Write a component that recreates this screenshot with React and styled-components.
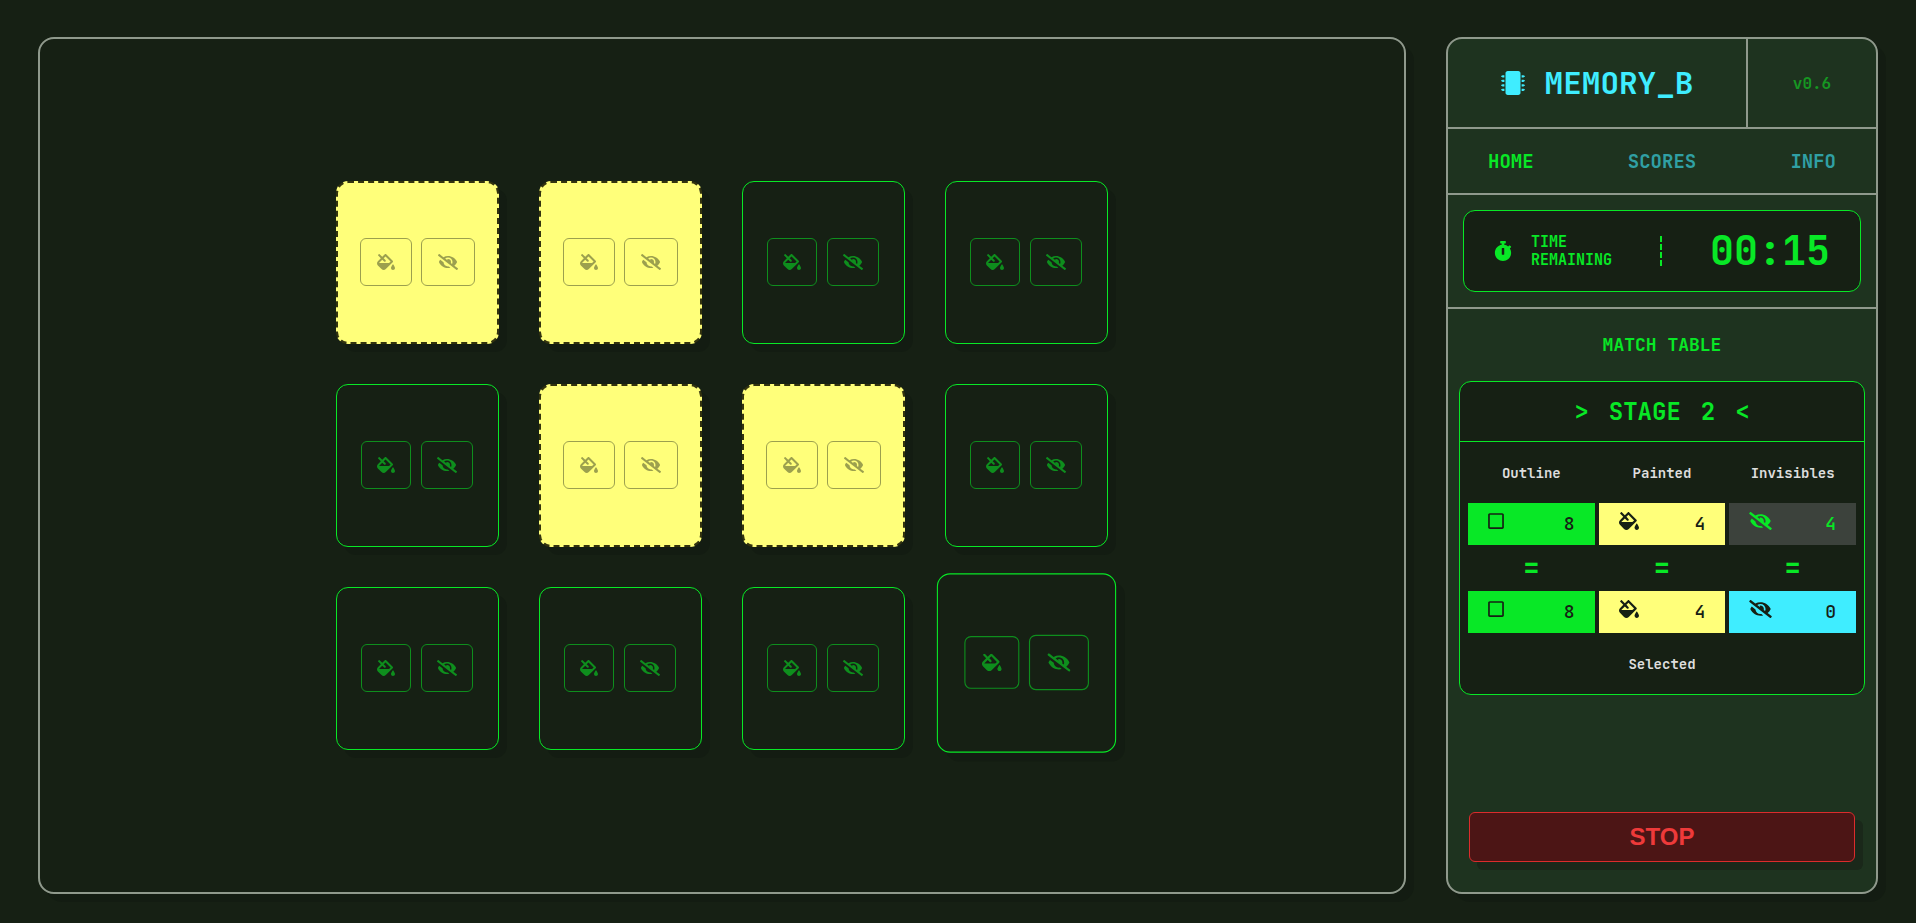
import React from 'react';
import styled, { createGlobalStyle, css } from 'styled-components';
import { FaMicrochip, FaStopwatch, FaFillDrip, FaEyeSlash, FaRegSquare } from 'react-icons/fa';

const color = {
  bg: '#162014',
  panel: '#1e331f',
  line: '#8f998c',
  green: '#08e826',
  yellow: '#ffff7a',
  cyan: '#3fedff',
  grey: '#3c423c',
  text: '#dddddd',
};
const mono = `'JetBrains Mono', 'DejaVu Sans Mono', 'Liberation Mono', monospace`;

const GlobalStyle = createGlobalStyle`
  *, *::before, *::after { box-sizing: border-box; }
  body { margin: 0; background: ${color.bg}; color: ${color.green}; font-family: ${mono}; }
  button { font: inherit; cursor: pointer; }
`;

const Page = styled.div`
  display: flex;
  gap: 40px;
  min-height: 100vh;
  padding: 37px 38px 29px;
`;

const shadow = '8px 8px 0 rgba(15, 22, 15, 0.35)';

const panel = css`
  border: 2px solid ${color.line};
  border-radius: 16px;
  box-shadow: ${shadow};
`;

const Board = styled.main`
  ${panel}
  flex: 1;
  display: flex;
  align-items: center;
  justify-content: center;
`;

const CardGrid = styled.div`
  display: grid;
  grid-template-columns: repeat(4, 163px);
  gap: 40px;
`;

const Card = styled.div`
  display: flex;
  align-items: center;
  justify-content: center;
  gap: 10px;
  aspect-ratio: 1;
  padding: 0 1px 1px 0;
  border: 1px solid ${color.green};
  border-radius: 12px;
  background: ${color.bg};
  color: ${color.green};
  box-shadow: ${shadow};
  ${(p) => p.$painted && css`
    gap: 9px;
    border: 2px dashed #33330f;
    background: ${color.yellow};
    color: ${color.bg};
  `}
  ${(p) => p.$active && css`transform: scale(1.1) translateY(-5px);`}
`;

const CardButton = styled.button`
  display: flex;
  align-items: center;
  justify-content: center;
  padding: ${(p) => (p.$painted ? '15px 16px' : '15px')};
  border: 1px solid currentColor;
  border-radius: 6px;
  background: transparent;
  color: inherit;
  opacity: ${(p) => (p.$painted ? 0.42 : 0.55)};
  ${(p) => p.$active && css`transform: scale(1.05);`}
`;

const glyph = (ratio) => css`
  display: block;
  height: ${(p) => p.$size}px;
  width: ${(p) => Math.round(p.$size * ratio)}px;
`;
const BucketIcon = styled(({ $size, ...p }) => <FaFillDrip {...p} />)`${glyph(1.125)}`;
const EyeIcon = styled(({ $size, ...p }) => <FaEyeSlash {...p} />)`${glyph(1.25)}`;
const SquareIcon = styled(({ $size, ...p }) => <FaRegSquare {...p} />)`${glyph(0.875)}`;
const WatchIcon = styled(({ $size, ...p }) => <FaStopwatch {...p} />)`${glyph(0.875)}`;
const ChipIcon = styled(({ $size, ...p }) => <FaMicrochip {...p} />)`${glyph(1)}`;

const Sidebar = styled.aside`
  ${panel}
  flex: 0 0 432px;
  display: flex;
  flex-direction: column;
  background: ${color.panel};
`;

const Header = styled.header`
  display: flex;
  height: 90px;
  border-bottom: 2px solid ${color.line};
`;

const Brand = styled.div`
  flex: 1;
  display: flex;
  align-items: center;
  justify-content: center;
  gap: 20px;
  color: ${color.cyan};
`;

const Title = styled.h1`
  margin: 0;
  font-size: 31px;
  line-height: 40px;
  font-weight: 700;
`;

const Version = styled.div`
  flex: 0 0 130px;
  display: flex;
  align-items: center;
  justify-content: center;
  border-left: 2px solid ${color.line};
  color: #169722;
  font-size: 16px;
  font-weight: 700;
`;

const Nav = styled.nav`
  display: flex;
  align-items: center;
  justify-content: space-between;
  height: 66px;
  padding: 0 40px;
  border-bottom: 2px solid ${color.line};
`;

const NavLink = styled.a`
  color: ${(p) => (p.$current ? color.green : '#30a0a4')};
  font-size: 19px;
  font-weight: 700;
  text-decoration: none;
`;

const TimerSection = styled.section`
  padding: 15px;
  border-bottom: 2px solid ${color.line};
`;

const TimerBox = styled.div`
  display: flex;
  align-items: center;
  justify-content: space-between;
  height: 82px;
  padding: 0 30px;
  border: 1px solid ${color.green};
  border-radius: 12px;
  background: ${color.bg};
`;

const TimerLabel = styled.div`
  display: flex;
  align-items: center;
  gap: 19px;
  font-size: 15px;
  line-height: 18px;
  font-weight: 700;
`;

const Divider = styled.span`
  height: 30px;
  border-left: 2px dashed ${color.green};
`;

const Clock = styled.time`
  font-size: 40px;
  line-height: 48px;
  font-weight: 700;
`;

const SectionTitle = styled.h2`
  margin: 0;
  font-size: 18px;
  line-height: 72px;
  font-weight: 700;
  text-align: center;
`;

const MatchBox = styled.section`
  margin: 0 11px;
  border: 1px solid ${color.green};
  border-radius: 12px;
  background: ${color.bg};
`;

const Stage = styled.h3`
  display: flex;
  justify-content: center;
  gap: 20px;
  margin: 0;
  border-bottom: 1px solid ${color.green};
  font-size: 24px;
  line-height: 59px;
  font-weight: 700;
`;

const MatchTable = styled.table`
  width: 100%;
  padding: 0 4px;
  border-collapse: separate;
  border-spacing: 4px 0;
  table-layout: fixed;
`;

const Label = styled.th`
  height: 61px;
  padding: 0;
  color: ${color.text};
  font-size: 14px;
  font-weight: 700;
`;

const Equals = styled.td`
  height: 46px;
  padding: 0;
  font-size: 28px;
  line-height: 44px;
  font-weight: 700;
  text-align: center;
  vertical-align: top;
`;

const Cell = styled.td`
  height: 42px;
  padding: 0 20px;
  background: ${(p) => color[p.$fill]};
  color: ${(p) => (p.$fill === 'grey' ? color.green : color.bg)};
  font-size: 18px;
  font-weight: 500;
  line-height: 24px;
`;

const CellContent = styled.div`
  display: flex;
  align-items: center;
  justify-content: space-between;
  svg { margin-bottom: 6px; }
`;

const Footer = styled.footer`
  display: flex;
  margin-top: auto;
  padding: 30px 21px;
`;

const StopButton = styled.button`
  flex: 1;
  height: 50px;
  border: 1px solid #dc2c2c;
  border-radius: 6px;
  background: #4c1515;
  color: #ee3a3a;
  box-shadow: 8px 8px 0 #1a281a;
  font-family: Arial, 'Liberation Sans', sans-serif;
  font-size: 24px;
  font-weight: 700;
`;

const cards = [
  { painted: true }, { painted: true }, {}, {},
  {}, { painted: true }, { painted: true }, {},
  {}, {}, {}, { active: true },
];

const target = [
  { fill: 'green', Icon: SquareIcon, count: 8 },
  { fill: 'yellow', Icon: BucketIcon, count: 4 },
  { fill: 'grey', Icon: EyeIcon, count: 4 },
];
const selected = [
  { fill: 'green', Icon: SquareIcon, count: 8 },
  { fill: 'yellow', Icon: BucketIcon, count: 4 },
  { fill: 'cyan', Icon: EyeIcon, count: 0 },
];

function CountRow({ items }) {
  return (
    <tr>
      {items.map(({ fill, Icon, count }) => (
        <Cell key={fill} $fill={fill}>
          <CellContent><Icon $size={18} /><span>{count}</span></CellContent>
        </Cell>
      ))}
    </tr>
  );
}

export default function App() {
  return (
    <>
      <GlobalStyle />
      <Page>
        <Board>
          <CardGrid>
            {cards.map((c, i) => (
              <Card key={i} $painted={c.painted} $active={c.active}>
                <CardButton type="button" aria-label="Paint" $painted={c.painted}>
                  <BucketIcon $size={16} />
                </CardButton>
                <CardButton type="button" aria-label="Hide" $painted={c.painted} $active={c.active}>
                  <EyeIcon $size={16} />
                </CardButton>
              </Card>
            ))}
          </CardGrid>
        </Board>
        <Sidebar>
          <Header>
            <Brand><ChipIcon $size={24} /><Title>MEMORY_B</Title></Brand>
            <Version>v0.6</Version>
          </Header>
          <Nav>
            <NavLink href="#home" $current>HOME</NavLink>
            <NavLink href="#scores">SCORES</NavLink>
            <NavLink href="#info">INFO</NavLink>
          </Nav>
          <TimerSection>
            <TimerBox>
              <TimerLabel><WatchIcon $size={20} /><span>TIME<br />REMAINING</span></TimerLabel>
              <Divider />
              <Clock>00:15</Clock>
            </TimerBox>
          </TimerSection>
          <SectionTitle>MATCH TABLE</SectionTitle>
          <MatchBox>
            <Stage><span>&gt;</span><span>STAGE</span><span>2</span><span>&lt;</span></Stage>
            <MatchTable>
              <thead>
                <tr>
                  <Label scope="col">Outline</Label>
                  <Label scope="col">Painted</Label>
                  <Label scope="col">Invisibles</Label>
                </tr>
              </thead>
              <tbody>
                <CountRow items={target} />
                <tr><Equals>=</Equals><Equals>=</Equals><Equals>=</Equals></tr>
                <CountRow items={selected} />
              </tbody>
              <tfoot>
                <tr><Label colSpan={3}>Selected</Label></tr>
              </tfoot>
            </MatchTable>
          </MatchBox>
          <Footer><StopButton type="button">STOP</StopButton></Footer>
        </Sidebar>
      </Page>
    </>
  );
}
